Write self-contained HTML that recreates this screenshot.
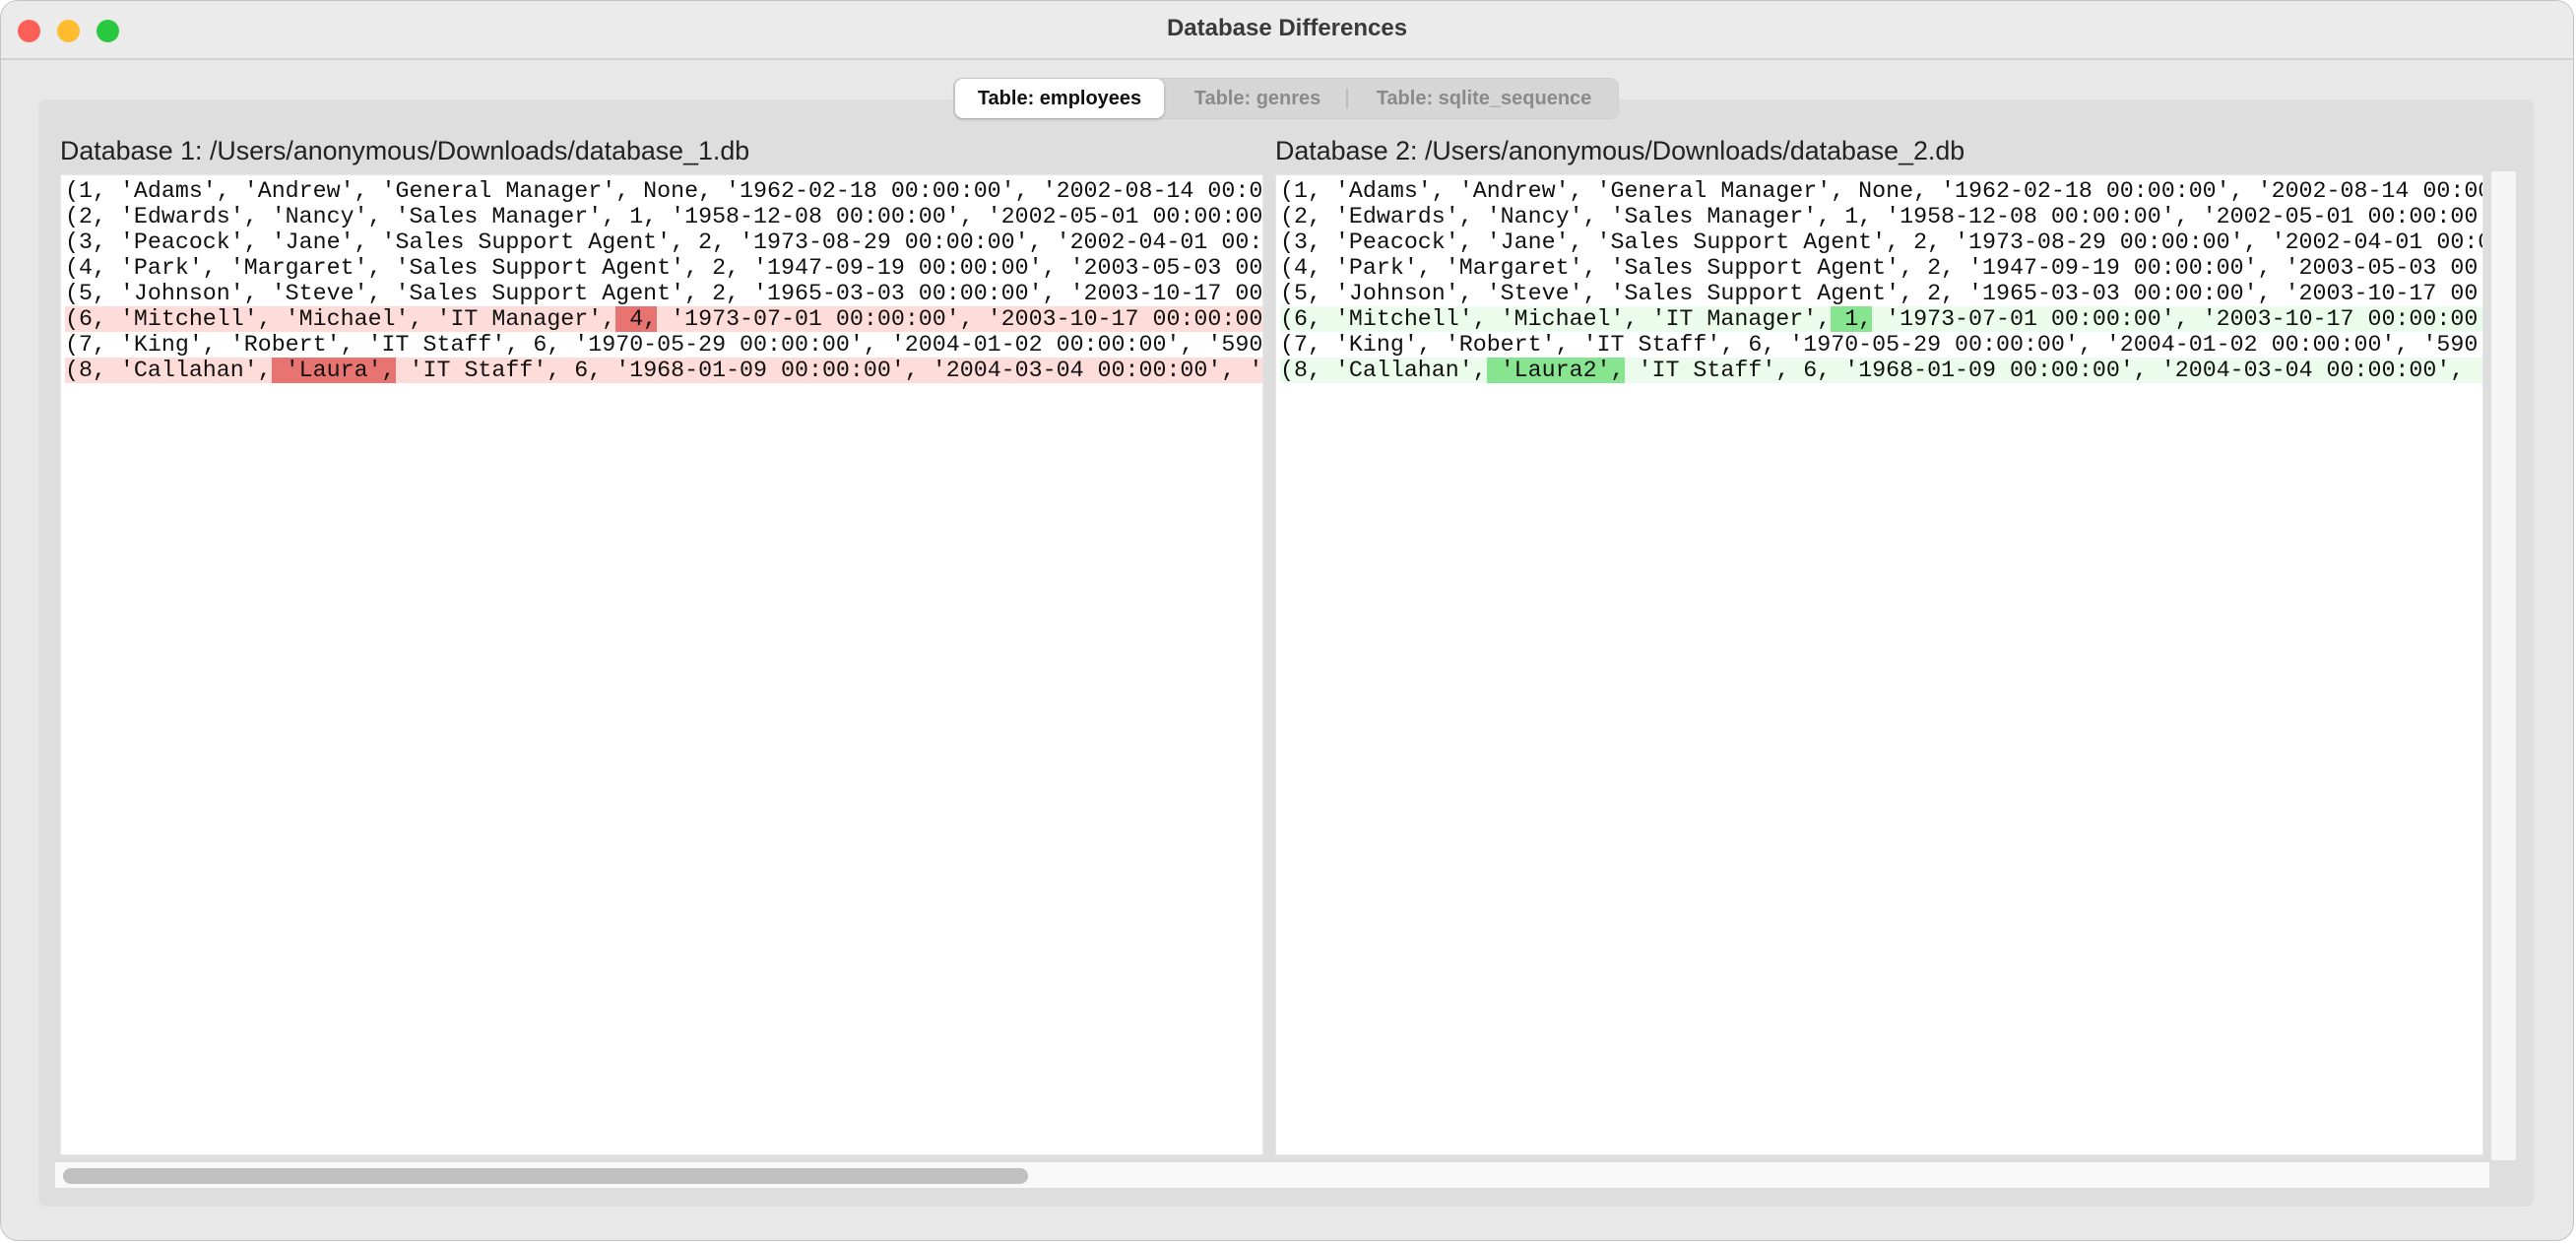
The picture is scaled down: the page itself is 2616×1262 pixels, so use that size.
<!DOCTYPE html>
<html><head><meta charset="utf-8"><style>
*{margin:0;padding:0;box-sizing:border-box}
body{width:2616px;height:1262px;background:#fff;position:relative;overflow:hidden;font-family:"Liberation Sans",sans-serif}
.win{position:absolute;left:0;top:0;width:2614px;height:1260px;background:#e8e8e8;border:1px solid #c4c4c4;border-radius:18px;overflow:hidden}
.title{position:absolute;left:0;top:0;right:0;height:60px;background:#ebebeb;border-bottom:2px solid #d2d2d2}
.dot{position:absolute;top:19px;width:23px;height:23px;border-radius:50%}
.ttl{position:absolute;left:0;right:0;top:14px;text-align:center;font-weight:bold;font-size:24px;color:#3a3a3a}
.panel{position:absolute;left:38px;top:100px;width:2534px;height:1124px;background:#dedede;border-radius:8px}
.seg{position:absolute;left:967px;top:78px;width:676px;height:42px;background:#d6d6d6;border-radius:9px;border:1px solid #cfcfcf}
.tab{position:absolute;top:0;height:40px;line-height:40px;font-size:20px;font-weight:bold;color:#8a8a8a;text-align:center}
.sel{background:#fff;border-radius:8px;color:#111;box-shadow:0 1px 3px rgba(0,0,0,.25)}
.lbl{position:absolute;top:137px;font-size:26.8px;color:#222}
.ta{position:absolute;top:176px;height:996px;background:#fff;border:1px solid #e6e6e6;overflow:hidden}
.code{position:absolute;top:3px;left:4px;font-family:"Liberation Mono",monospace;font-size:23.3px;line-height:26px;color:#111}
.row{height:26px;width:1300px;white-space:pre}
.rl{background:#fddcd9}.rd{background:#e77471}
.gl{background:#ecfcec}.gd{background:#86e58e}
</style></head><body>
<div class="win">
<div class="title">
<div class="dot" style="left:17px;background:#fe5f57"></div>
<div class="dot" style="left:57px;background:#febc2e"></div>
<div class="dot" style="left:97px;background:#28c840"></div>
<div class="ttl">Database Differences</div>
</div>
<div class="panel"></div>
<div class="seg">
<div class="tab sel" style="left:1px;width:212px">Table: employees</div>
<div class="tab" style="left:220px;width:176px">Table: genres</div>
<div style="position:absolute;left:398px;top:10px;width:2px;height:20px;background:#bdbdbd"></div>
<div class="tab" style="left:400px;width:276px">Table: sqlite_sequence</div>
</div>
<div class="lbl" style="left:60px">Database 1: /Users/anonymous/Downloads/database_1.db</div>
<div class="lbl" style="left:1294px">Database 2: /Users/anonymous/Downloads/database_2.db</div>
<div class="ta" style="left:60px;width:1222px">
<div class="code">
<div class="row">(1, 'Adams', 'Andrew', 'General Manager', None, '1962-02-18 00:00:00', '2002-08-14 00:00:00'</div>
<div class="row">(2, 'Edwards', 'Nancy', 'Sales Manager', 1, '1958-12-08 00:00:00', '2002-05-01 00:00:00'</div>
<div class="row">(3, 'Peacock', 'Jane', 'Sales Support Agent', 2, '1973-08-29 00:00:00', '2002-04-01 00:00:00'</div>
<div class="row">(4, 'Park', 'Margaret', 'Sales Support Agent', 2, '1947-09-19 00:00:00', '2003-05-03 00:00:00'</div>
<div class="row">(5, 'Johnson', 'Steve', 'Sales Support Agent', 2, '1965-03-03 00:00:00', '2003-10-17 00:00:00'</div>
<div class="row rl">(6, 'Mitchell', 'Michael', 'IT Manager',<span class="rd"> 4,</span> '1973-07-01 00:00:00', '2003-10-17 00:00:00'</div>
<div class="row">(7, 'King', 'Robert', 'IT Staff', 6, '1970-05-29 00:00:00', '2004-01-02 00:00:00', '590</div>
<div class="row rl">(8, 'Callahan',<span class="rd"> 'Laura',</span> 'IT Staff', 6, '1968-01-09 00:00:00', '2004-03-04 00:00:00', '</div>
</div></div>
<div class="ta" style="left:1294px;width:1227px">
<div class="code">
<div class="row">(1, 'Adams', 'Andrew', 'General Manager', None, '1962-02-18 00:00:00', '2002-08-14 00:00:00'</div>
<div class="row">(2, 'Edwards', 'Nancy', 'Sales Manager', 1, '1958-12-08 00:00:00', '2002-05-01 00:00:00'</div>
<div class="row">(3, 'Peacock', 'Jane', 'Sales Support Agent', 2, '1973-08-29 00:00:00', '2002-04-01 00:00:00'</div>
<div class="row">(4, 'Park', 'Margaret', 'Sales Support Agent', 2, '1947-09-19 00:00:00', '2003-05-03 00:00:00'</div>
<div class="row">(5, 'Johnson', 'Steve', 'Sales Support Agent', 2, '1965-03-03 00:00:00', '2003-10-17 00:00:00'</div>
<div class="row gl">(6, 'Mitchell', 'Michael', 'IT Manager',<span class="gd"> 1,</span> '1973-07-01 00:00:00', '2003-10-17 00:00:00'</div>
<div class="row">(7, 'King', 'Robert', 'IT Staff', 6, '1970-05-29 00:00:00', '2004-01-02 00:00:00', '590</div>
<div class="row gl">(8, 'Callahan',<span class="gd"> 'Laura2',</span> 'IT Staff', 6, '1968-01-09 00:00:00', '2004-03-04 00:00:00', </div>
</div></div>
<div style="position:absolute;left:2529px;top:173px;width:25px;height:1004px;background:#f5f5f5"></div>
<div style="position:absolute;left:55px;top:1179px;width:2472px;height:26px;background:#f8f8f8"></div>
<div style="position:absolute;left:63px;top:1185px;width:980px;height:16px;background:#c0c0c0;border-radius:8px"></div>
</div>
</body></html>
